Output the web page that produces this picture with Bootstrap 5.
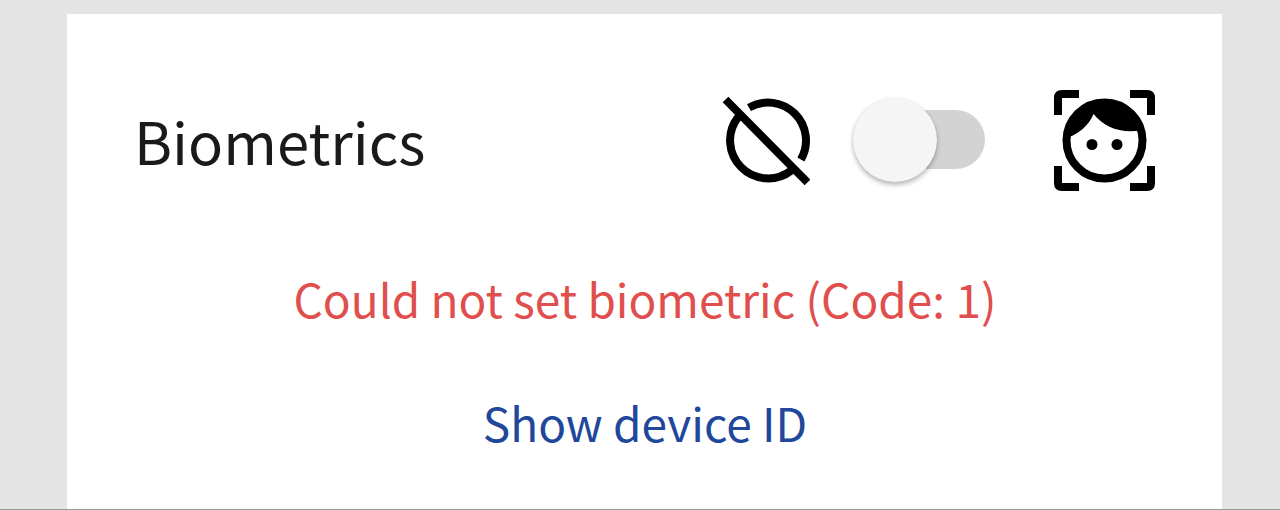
<!DOCTYPE html>
<html lang="en">
<head>
<meta charset="utf-8">
<meta name="viewport" content="width=device-width, initial-scale=1">
<title>Biometrics</title>
<link href="https://cdn.jsdelivr.net/npm/bootstrap@5.3.0/dist/css/bootstrap.min.css" rel="stylesheet">
<style>
body{background:#e4e4e4;font-family:"Noto Sans CJK SC","Noto Sans",sans-serif;border-bottom:1px solid #999}
.settings{margin:14px 58px 0 67px;padding:72px 66px 0 67px;background:#fff}
.setting-name{font-size:58px;line-height:72px;color:#1a1a1c}
.toggle{appearance:none;width:132px;height:84px;margin:0 69px 0 43px;cursor:pointer;position:relative}
.toggle::before{content:"";position:absolute;inset:12px 0 13px 20px;border-radius:30px;background:#d3d3d3}
.toggle::after{content:"";position:absolute;left:0;top:0;width:84px;height:84px;border-radius:50%;background:#f5f5f5;box-shadow:0 3px 5px rgba(0,0,0,.28),0 0 3px rgba(0,0,0,.06)}
.toggle:checked::after{left:auto;right:0}
.message,.device-link{font-size:46px;line-height:64px}
.message{color:#e04f4d;margin-top:72px}
.device-link{color:#20479a}
.device-row{margin-top:60px;padding-bottom:52px}
</style>
</head>
<body class="min-vh-100 d-flex flex-column">
<main class="settings flex-grow-1">
  <div class="d-flex align-items-center">
    <label class="setting-name me-auto" for="biometrics">Biometrics</label>
    <svg width="88" height="108" viewBox="721 86 88 108" fill="none" stroke="#000" stroke-width="8" aria-hidden="true">
      <path d="M724.500 99.500 806.500 182.500M748 107.600A38 38 0 0 1 799.900 159.500M737 117.200A38 38 0 0 0 790.300 170.500"/>
    </svg>
    <input class="toggle flex-shrink-0" type="checkbox" role="switch" id="biometrics">
    <svg width="102" height="108" viewBox="1054 86 102 108" aria-hidden="true">
      <path fill="none" stroke="#000" stroke-width="8" d="M1058 115V98Q1058 94 1062 94H1079M1130 94H1147Q1151 94 1151 98V115M1151 166V183Q1151 187 1147 187H1130M1079 187H1062Q1058 187 1058 183V166"/>
      <circle cx="1104.500" cy="140.500" r="38" fill="none" stroke="#000" stroke-width="8"/>
      <path d="M1068 137.500C1080 133 1089 125 1093.500 114C1104 127 1120 133.500 1140 130.500L1136 118Q1125 101 1105 101Q1082 100 1070 119Z"/>
      <circle cx="1092" cy="144.500" r="5.500"/><circle cx="1117" cy="144.500" r="5.500"/>
    </svg>
  </div>
  <p class="message mb-0 text-center" role="alert">Could not set biometric (Code: 1)</p>
  <div class="device-row text-center"><a class="device-link text-decoration-none" href="#device">Show device ID</a></div>
</main>
<script src="https://cdn.jsdelivr.net/npm/bootstrap@5.3.0/dist/js/bootstrap.bundle.min.js"></script>
</body>
</html>
